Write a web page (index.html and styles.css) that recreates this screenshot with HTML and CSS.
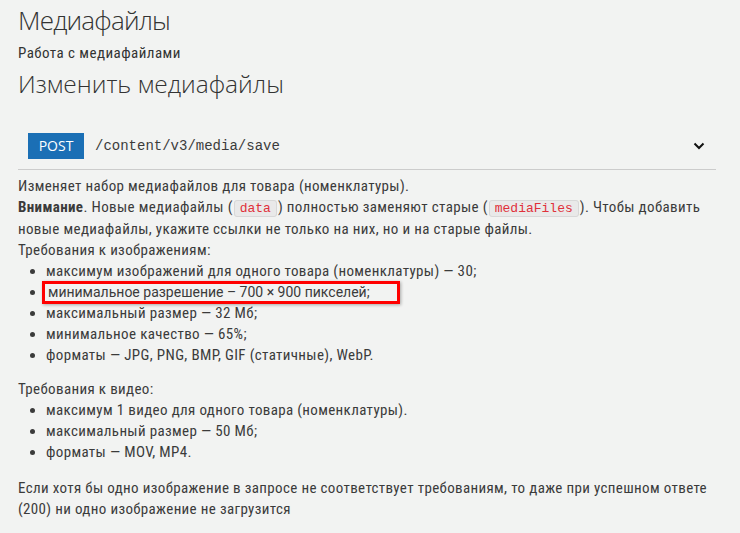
FILE: index.html
```html
<!DOCTYPE html>
<html lang="ru">
<head>
    <meta charset="UTF-8">
    <title>Медиафайлы</title>
    <link rel="stylesheet" href="styles.css">
</head>
<body>
    <div class="page">
        <h1 class="tag-title">Медиафайлы</h1>
        <p class="tag-desc">Работа с медиафайлами</p>
        <h2 class="op-title">Изменить медиафайлы</h2>

        <div class="op-header">
            <span class="method">POST</span>
            <span class="path">/content/v3/media/save</span>
            <svg class="chevron" width="14" height="14" viewBox="0 0 14 14">
                <path d="M2.5 4.5 L7 9 L11.5 4.5" fill="none" stroke="#111" stroke-width="2"/>
            </svg>
        </div>

        <div class="op-body">
            <p>Изменяет набор медиафайлов для товара (номенклатуры).<br>
            <b>Внимание</b>. Новые медиафайлы (<code>data</code>) полностью заменяют старые (<code>mediaFiles</code>). Чтобы добавить новые медиафайлы, укажите ссылки не только на них, но и на старые файлы.<br>
            Требования к изображениям:</p>
            <ul class="img-list">
                <li>максимум изображений для одного товара (номенклатуры) — 30;</li>
                <li><span class="highlight">минимальное разрешение – 700 × 900 пикселей;</span></li>
                <li>максимальный размер — 32 Мб;</li>
                <li>минимальное качество — 65%;</li>
                <li>форматы — JPG, PNG, BMP, GIF (статичные), WebP.</li>
            </ul>
            <p>Требования к видео:</p>
            <ul class="video-list">
                <li>максимум 1 видео для одного товара (номенклатуры).</li>
                <li>максимальный размер — 50 Мб;</li>
                <li>форматы — MOV, MP4.</li>
            </ul>
            <p>Если хотя бы одно изображение в запросе не соответствует требованиям, то даже при успешном ответе (200) ни одно изображение не загрузится</p>
        </div>
    </div>
</body>
</html>
```

FILE: styles.css
```css
body {
    margin: 0;
    padding: 0;
    background-color: #f2f3f2;
    color: #3b3b3b;
    font-family: "Roboto Condensed", Roboto, sans-serif;
    font-stretch: 84%;
}

.page {
    padding: 0 18px;
}

.tag-title {
    margin: 0;
    padding-top: 4px;
    font-family: "Open Sans", sans-serif;
    font-stretch: 100%;
    font-weight: 300;
    font-size: 26px;
    letter-spacing: -0.8px;
    line-height: 32px;
    color: #333;
}

.tag-desc {
    margin: 8px 0 0;
    font-size: 15px;
    line-height: 18px;
    letter-spacing: 0.45px;
    color: #333;
}

.op-title {
    margin: 8px 0 0;
    font-family: "Open Sans", sans-serif;
    font-stretch: 100%;
    font-weight: 300;
    font-size: 24.5px;
    line-height: 28px;
    color: #333;
}

.op-header {
    display: flex;
    align-items: center;
    margin-top: 35px;
    padding: 0 10px 10px;
    border-bottom: 1px solid #cccccc;
    width: 678px;
}

.method {
    width: 56px;
    height: 26px;
    line-height: 26px;
    text-align: center;
    background-color: #1b6fb5;
    color: #fff;
    font-family: "Open Sans", sans-serif;
    font-stretch: 100%;
    font-size: 14px;
}

.path {
    margin-left: 11px;
    flex: 1;
    font-family: "Liberation Mono", monospace;
    font-size: 14px;
    color: #3b3b3b;
}

.op-body {
    padding-top: 6px;
    font-size: 15px;
    line-height: 21px;
    letter-spacing: 0.35px;
    max-width: 700px;
}

.op-body p {
    margin: 0;
}

.op-body ul {
    margin: 0;
    padding-left: 28px;
}

.img-list {
    padding-bottom: 13px;
}

.video-list {
    padding-bottom: 15px;
}

code {
    font-family: "Liberation Mono", monospace;
    font-size: 13px;
    letter-spacing: 0;
    color: #e0303a;
    background-color: #e9e9e9;
    border: 1px solid #d8d8d8;
    border-radius: 3px;
    padding: 0 5px;
    margin: 0 1px;
}

.highlight {
    display: inline-block;
    vertical-align: middle;
    margin: -3px 0 -1px -4px;
    padding: 0 27px 0 3px;
    font-family: Roboto, sans-serif;
    font-stretch: 100%;
    font-size: 14px;
    letter-spacing: 0;
    line-height: 17px;
    border: 3px solid #f00;
    box-shadow: 1px 1px 3px rgba(0, 0, 0, 0.3);
}
```
